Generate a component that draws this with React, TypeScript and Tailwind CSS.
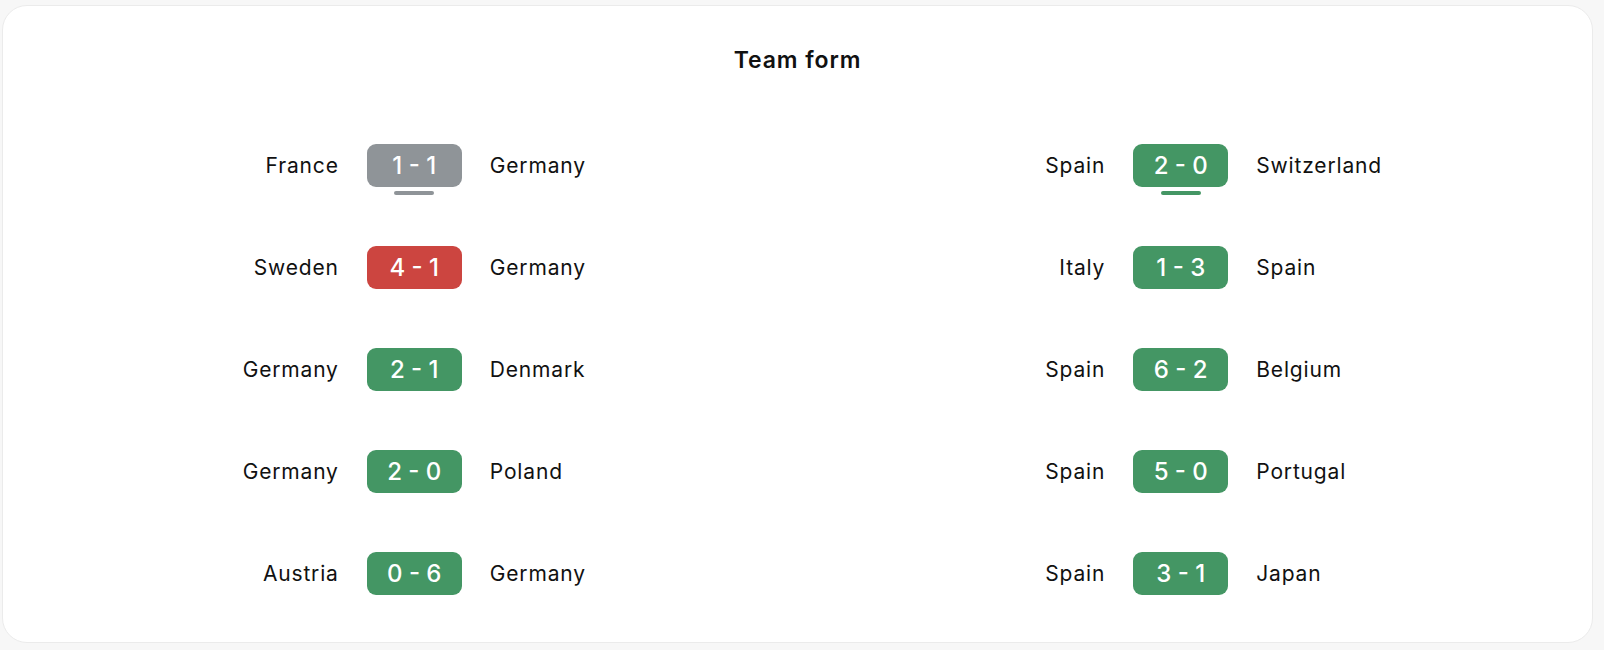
import React from "react";

type Match = {
  home: string;
  away: string;
  score: string;
  result: "win" | "draw" | "loss";
  latest?: boolean;
};

const germany: Match[] = [
  { home: "France", away: "Germany", score: "1 - 1", result: "draw", latest: true },
  { home: "Sweden", away: "Germany", score: "4 - 1", result: "loss" },
  { home: "Germany", away: "Denmark", score: "2 - 1", result: "win" },
  { home: "Germany", away: "Poland", score: "2 - 0", result: "win" },
  { home: "Austria", away: "Germany", score: "0 - 6", result: "win" },
];

const spain: Match[] = [
  { home: "Spain", away: "Switzerland", score: "2 - 0", result: "win", latest: true },
  { home: "Italy", away: "Spain", score: "1 - 3", result: "win" },
  { home: "Spain", away: "Belgium", score: "6 - 2", result: "win" },
  { home: "Spain", away: "Portugal", score: "5 - 0", result: "win" },
  { home: "Spain", away: "Japan", score: "3 - 1", result: "win" },
];

const badgeBg = {
  win: "bg-[#449664]",
  draw: "bg-[#8f9498]",
  loss: "bg-[#cc4540]",
};

function MatchRow({ match }: { match: Match }) {
  return (
    <div className="grid h-[43px] grid-cols-[1fr_95px_1fr] items-center gap-[28px]">
      <span className="text-right text-[21px] tracking-[0.04em] text-[#111]">{match.home}</span>
      <div className="relative">
        <div
          className={`flex h-[43px] items-center justify-center rounded-[9px] text-[24px] font-medium text-white ${badgeBg[match.result]}`}
        >
          {match.score}
        </div>
        {match.latest && (
          <div
            className={`absolute left-1/2 top-[47px] h-[4px] w-[40px] -translate-x-1/2 rounded-full ${badgeBg[match.result]}`}
          />
        )}
      </div>
      <span className="text-left text-[21px] tracking-[0.04em] text-[#111]">{match.away}</span>
    </div>
  );
}

export default function App() {
  return (
    <div className="h-[650px] w-full bg-[#f7f7f7] pl-[2px] pt-[5px] font-['Inter',sans-serif]">
      <div className="h-[638px] w-[1591px] rounded-[25px] border border-[#ebebeb] bg-white px-[28px] pt-[40px]">
        <h2 className="text-center text-[23px] font-semibold leading-[28px] tracking-[0.04em] text-[#111]">
          Team form
        </h2>

        {/* Two teams side by side */}
        <div className="mt-[70px] grid grid-cols-2">
          <div className="flex flex-col gap-[59px]">
            {germany.map((m, i) => (
              <MatchRow key={i} match={m} />
            ))}
          </div>
          <div className="flex flex-col gap-[59px]">
            {spain.map((m, i) => (
              <MatchRow key={i} match={m} />
            ))}
          </div>
        </div>
      </div>
    </div>
  );
}
